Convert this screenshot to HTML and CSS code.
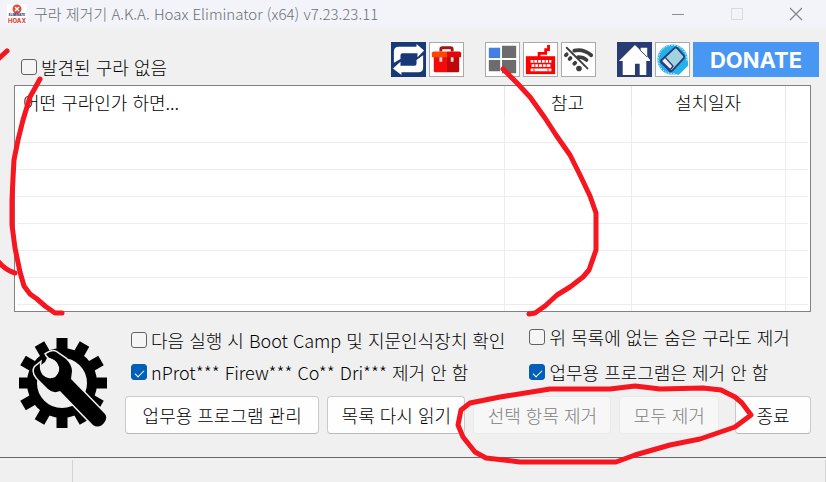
FILE: index.html
```html
<!DOCTYPE html>
<html lang="ko">
<head>
<meta charset="utf-8">
<meta name="viewport" content="width=device-width, initial-scale=1">
<title>구라 제거기</title>
<link rel="stylesheet" href="styles.css">
</head>
<body>
<div class="window">
  <header class="titlebar">
    <svg class="app-icon" viewBox="0 0 20 20">
      <rect width="20" height="20" fill="#fff"/>
      <circle cx="10" cy="5" r="4.500" fill="#dc4a3b"/>
      <path d="M8 3l4 4M12 3L8 7" stroke="#fff" stroke-width="1.400"/>
      <text x="10" y="12" class="logo-small">ELIMINATE</text>
      <text x="10" y="19" class="logo-big">HOAX</text>
    </svg>
    <h1 class="title">구라 제거기 A.K.A. Hoax Eliminator (x64) v7.23.23.11</h1>
    <div class="caption-buttons">
      <button type="button" class="caption" aria-label="최소화"><svg viewBox="0 0 14 14"><path d="M1 7.500h12" stroke="#8b8d91"/></svg></button>
      <button type="button" class="caption" aria-label="최대화" disabled><svg viewBox="0 0 14 14"><rect x="1.500" y="1.500" width="11" height="11" fill="none" stroke="#d9dbdf"/></svg></button>
      <button type="button" class="caption" aria-label="닫기"><svg viewBox="0 0 14 14"><path d="M1 1l12 12M13 1L1 13" stroke="#818387" stroke-width="1.200"/></svg></button>
    </div>
  </header>

  <main class="content">
    <div class="toolbar">
      <label class="check check-all"><input type="checkbox"><span>발견된 구라 없음</span></label>
      <div class="tools">
        <div class="tool-group">
          <button type="button" class="tool navy" aria-label="새로 고침">
            <svg viewBox="0 0 35 35"><g fill="#fff"><path d="M2 21V9q0-5 5-5h19V1l8 7-7 7v-4H11q-2 0-2 2v4z"/><path d="M33 13v13q0 5-5 5H10v3l-9-7 8-7v4h15q2 0 2-2v-4z"/></g></svg>
          </button>
          <button type="button" class="tool" aria-label="도구 상자">
            <svg viewBox="0 0 35 35"><path d="M11.500 9V6.500q0-1.500 1.500-1.500h9q1.500 0 1.500 1.500V9" fill="none" stroke="#a4121c" stroke-width="3"/><path d="M4 14h14v17H5q-1 0-1-2z" fill="#f30b0b"/><path d="M18 14h13v15q0 2-1 2H18z" fill="#bd0708"/><path d="M4 9h14v6H2v-4q0-2 2-2z" fill="#ff4600"/><path d="M18 9h13q2 0 2 2v4H18z" fill="#e20606"/><path d="M10 15h3v5h-3zM22 15h3v5h-3z" fill="#dadada"/></svg>
          </button>
        </div>
        <div class="tool-group">
          <button type="button" class="tool" aria-label="프로그램">
            <svg viewBox="0 0 35 35"><path d="M3 5h12v11H3z" fill="#427ee5"/><path d="M17 3h15v13H17zM3 18h12v12H3zM17 18h15v14H17z" fill="#6c6c6c"/></svg>
          </button>
          <button type="button" class="tool" aria-label="키보드">
            <svg viewBox="0 0 35 35"><path d="M16 15v-4h7V7h3V2" fill="none" stroke="#f00" stroke-width="3"/><path d="M2 14h31v19H2z" fill="#f00"/><path d="M7 18h22v3H7zM8 22.500h20v3H8zM7 27h22v3H7z" fill="#fff"/><path d="M10.500 18v3M14.500 18v3M18.500 18v3M22.500 18v3M26 18v3M11.500 22v4M15.500 22v4M19.500 22v4M23.500 22v4M10.500 27v3M25.500 27v3" stroke="#f00"/></svg>
          </button>
          <button type="button" class="tool" aria-label="무선 차단">
            <svg viewBox="0 0 35 35"><g fill="none" stroke="#3e3e3e" stroke-linecap="round"><path d="M5 5l22 22" stroke-width="2"/><path d="M13 8q10-2 18 5M17 15q6 0 9 3" stroke-width="4"/><path d="M4 13l1-1M8 17l1-1M13 22l1-1" stroke-width="4"/></g><circle cx="18" cy="27" r="3" fill="#3e3e3e"/></svg>
          </button>
        </div>
        <div class="tool-group">
          <button type="button" class="tool navy-home" aria-label="홈페이지">
            <svg viewBox="0 0 35 35"><path d="M1 19L18 2l6 6V5h7v9l3 4v1h-4v15h-7V22h-5v12H5V19z" fill="#fff"/><path d="M23 7l8 8" stroke="#293b74" stroke-width="1"/></svg>
          </button>
          <button type="button" class="tool" aria-label="지우개">
            <svg viewBox="0 0 35 35"><circle cx="17.500" cy="17.500" r="16" fill="#26b2e8"/><circle cx="17.500" cy="17.500" r="15" fill="none" stroke="#e6faff" stroke-width="1" stroke-dasharray="1.500 1.500"/><path d="M17 31l14-14 3 3v4L24 34z" fill="#26b2e8"/><path d="M19.500 5.500q1.500-1.500 3 0l7 8q1 1 0 2.500L17.500 29q-2 2-3.500 0l-8-8q-1.500-1.500 0-3z" fill="#9ed3df" stroke="#263d7b" stroke-width="2"/><path d="M9.500 15l8.500 9.500-3 4-9-9q0-1 1-2z" fill="#eee9f2" stroke="#263d7b" stroke-width="1.500"/></svg>
          </button>
          <a href="#" class="donate">DONATE</a>
        </div>
      </div>
    </div>

    <div class="list">
      <table>
        <colgroup><col class="name"><col class="note"><col class="date"><col class="rest"></colgroup>
        <thead><tr><th class="first">어떤 구라인가 하면...</th><th>참고</th><th>설치일자</th><th></th></tr></thead>
        <tbody>
          <tr><td></td><td></td><td></td><td></td></tr>
          <tr><td></td><td></td><td></td><td></td></tr>
          <tr><td></td><td></td><td></td><td></td></tr>
          <tr><td></td><td></td><td></td><td></td></tr>
          <tr><td></td><td></td><td></td><td></td></tr>
          <tr><td></td><td></td><td></td><td></td></tr>
          <tr><td></td><td></td><td></td><td></td></tr>
          <tr><td></td><td></td><td></td><td></td></tr>
        </tbody>
      </table>
    </div>

    <div class="bottom">
      <svg class="gear" viewBox="0 0 88 92">
        <g transform="translate(43 46)">
          <path id="tooth" d="M-5.500-45h11v14h-11z"/>
          <use href="#tooth" transform="rotate(30)"/><use href="#tooth" transform="rotate(60)"/><use href="#tooth" transform="rotate(90)"/><use href="#tooth" transform="rotate(120)"/><use href="#tooth" transform="rotate(150)"/><use href="#tooth" transform="rotate(180)"/><use href="#tooth" transform="rotate(210)"/><use href="#tooth" transform="rotate(240)"/><use href="#tooth" transform="rotate(270)"/><use href="#tooth" transform="rotate(300)"/><use href="#tooth" transform="rotate(330)"/>
          <circle r="30" fill="none" stroke="#000" stroke-width="10"/>
        </g>
        <path d="M27 17Q33 13 37 15L47 22Q53 28 53 34L52 42L86 77Q89 81 85 86Q80 92 74 88L41 54Q34 57 29 52L18 41Q13 35 16 30L21 26Q20 34 24 38Q29 43 36 40Q41 35 40 30Q38 24 33 22Q29 21 27 17Z" stroke="#f0f0f0" stroke-width="3" paint-order="stroke"/>
        <path d="M28 21Q34 21 38 26Q42 34 36 40Q29 43 24 38Q21 33 22 28L26 25Z" fill="#f0f0f0"/>
      </svg>
      <div class="controls">
        <div class="options">
          <div class="option-column">
            <label class="check"><input type="checkbox"><span>다음 실행 시 Boot Camp 및 지문인식장치 확인</span></label>
            <label class="check"><input type="checkbox" checked><span>nProt*** Firew*** Co** Dri*** 제거 안 함</span></label>
          </div>
          <div class="option-column">
            <label class="check"><input type="checkbox"><span>위 목록에 없는 숨은 구라도 제거</span></label>
            <label class="check"><input type="checkbox" checked><span>업무용 프로그램은 제거 안 함</span></label>
          </div>
        </div>
        <div class="actions">
          <button type="button" class="action manage">업무용 프로그램 관리</button>
          <button type="button" class="action reload">목록 다시 읽기</button>
          <button type="button" class="action reload" disabled>선택 항목 제거</button>
          <button type="button" class="action all" disabled>모두 제거</button>
          <button type="button" class="action quit">종료</button>
        </div>
      </div>
    </div>
  </main>
  <footer class="statusbar"><div class="status-cell"></div><div class="status-rest"></div></footer>

  <svg class="marks" viewBox="0 0 826 482" preserveAspectRatio="none" aria-hidden="true">
    <path d="M-3 60L7 51"/>
    <path d="M-3 260Q5 270 15 273"/>
    <path d="M40 79L30 97L23 120L18 140L14 160L13 178L12 200L12 225L15 248L20 272L24 286L30 294L37 299L45 306L55 313L62 313"/>
    <path d="M503 69L517 83L530 97L545 118L556 135L570 155L580 175L590 196L596 213L596 250L589 270L583 277L570 287L557 295L545 306L535 313L529 314"/>
    <path d="M751 415L742 403L735 397L721 390L703 388L660 389L635 386L610 389L550 389L500 397L470 403L461 410L458 425L463 437L475 452L486 458L520 462L616 462L635 455L670 445L700 439L735 427Z"/>
  </svg>
</div>
</body>
</html>
```
FILE: styles.css
```css
* { box-sizing: border-box; }

body {
  margin: 0;
  background: #f0f0f0;
  color: #000;
  font: 18px/24px "Noto Sans CJK KR", sans-serif;
  font-weight: 300;
}

button, input { font: inherit; margin: 0; }

.window {
  position: relative;
  display: flex;
  flex-direction: column;
  min-height: 100vh;
  overflow: hidden;
}

.titlebar {
  display: flex;
  align-items: center;
  height: 32px;
  padding: 0 1px 4px 7px;
  background: linear-gradient(#f2f4f9 75%, #f0f0f0);
}
.app-icon { width: 20px; height: 20px; flex: none; }
.logo-small, .logo-big { font-family: Inter, sans-serif; text-anchor: middle; }
.logo-small { font-size: 3px; font-weight: 800; fill: #25335a; }
.logo-big { font-size: 6px; font-weight: 800; fill: #dc4a3b; }
.title {
  flex: 1;
  margin: 0 0 0 7px;
  font-size: 15px;
  font-weight: 300;
  color: #6c6e72;
  white-space: nowrap;
}
.caption-buttons { display: flex; }
.caption {
  display: grid;
  place-items: center;
  width: 59px;
  height: 28px;
  padding: 0;
  border: 0;
  background: none;
}
.caption svg { width: 14px; height: 14px; }

.content { flex: 1; padding: 10px 15px 0 14px; }

.toolbar {
  display: flex;
  justify-content: space-between;
  align-items: flex-start;
  height: 43px;
  margin-right: -8px;
}
.check {
  display: flex;
  align-items: center;
  gap: 4px;
  white-space: nowrap;
}
.check-all { padding: 13px 0 0 7px; }
.check input {
  appearance: none;
  display: grid;
  place-items: center;
  flex: none;
  width: 16px;
  height: 16px;
  border: 1px solid #626262;
  border-radius: 3px;
  background: #f5f5f5;
}
.check input:checked { background: #005fb8; border-color: #005fb8; }
.check input:checked::before {
  content: "";
  width: 8px;
  height: 4px;
  border: solid #fff;
  border-width: 0 0 1px 1px;
  transform: rotate(-45deg);
}

.tools { display: flex; gap: 21px; }
.tool-group { display: flex; gap: 3px; }
.tool {
  width: 35px;
  height: 35px;
  padding: 0;
  border: 1px solid #aaa;
  background: #fff;
}
.tool svg { display: block; width: 100%; height: 100%; }
.navy { border-color: #173976; background: #173976; }
.navy-home { border-color: #293b74; background: #293b74; }
.donate {
  width: 126px;
  height: 35px;
  background: #4797f3;
  color: #fff;
  font: 700 22px/36px Inter, sans-serif;
  text-align: center;
  text-decoration: none;
}

.list {
  height: 227px;
  padding: 0 2px;
  border: 1px solid #828282;
  background: #fff;
  overflow: hidden;
}
table { width: 100%; border-collapse: collapse; table-layout: fixed; }
.note { width: 127px; }
.date { width: 154px; }
.rest { width: 23px; }
th {
  height: 29px;
  padding: 3px 0 0;
  border-right: 1px solid #e5e5e5;
  font-weight: 300;
  line-height: 24px;
}
th:last-child, td:last-child { border-right: 0; }
.first { padding-left: 6px; text-align: left; }
td {
  height: 27px;
  padding: 0;
  border-right: 1px solid #ededed;
  border-bottom: 1px solid #ededed;
}

.bottom {
  display: flex;
  gap: 18px;
  padding: 13px 0 0 5px;
}
.gear { flex: none; width: 88px; height: 92px; margin-top: 12px; }
.controls { flex: 1; min-width: 0; }
.options { display: flex; gap: 24px; padding-left: 6px; }
.option-column { display: flex; flex-direction: column; gap: 11px; }
.option-column:first-child { padding-top: 3px; gap: 8px; }
.actions { display: flex; gap: 8px; margin-top: 12px; }
.action {
  height: 38px;
  padding: 0;
  border: 1px solid #cacaca;
  border-bottom-color: #b8b8b8;
  border-radius: 4px;
  background: #fefefe;
  color: #000;
  white-space: nowrap;
}
.action:disabled { border-color: #eaeaea; background: #f7f7f7; color: #808080; }
.manage { flex: 195 1 0; }
.reload { flex: 138 1 0; }
.all { flex: 99 1 0; }
.quit { flex: 75 1 0; margin-left: 8px; }

.statusbar { display: flex; height: 25px; border-top: 1px solid #666; }
.status-cell { width: 73px; margin-top: 2px; border-right: 1px solid #d2d2d2; }
.status-rest { flex: 1; margin-top: 2px; border-right: 1px solid #d2d2d2; }

.marks {
  position: absolute;
  inset: 0;
  width: 100%;
  height: 100%;
  pointer-events: none;
  fill: none;
  stroke: #f5161f;
  stroke-width: 5;
  stroke-linecap: round;
  stroke-linejoin: round;
}
```
